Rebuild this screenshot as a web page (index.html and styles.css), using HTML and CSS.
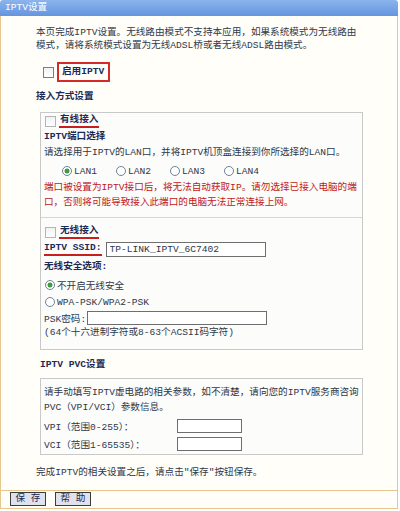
FILE: index.html
```html
<!DOCTYPE html>
<html lang="zh-CN">
<head>
    <meta charset="UTF-8">
    <title>IPTV设置</title>
    <link rel="stylesheet" href="styles.css">
</head>
<body>
    <div class="title">IPTV设置</div>
    <div class="panel">
        <div class="content">
            <p class="intro">本页完成IPTV设置。无线路由模式不支持本应用，如果系统模式为无线路由<br>模式，请将系统模式设置为无线ADSL桥或者无线ADSL路由模式。</p>

            <div class="enable-row">
                <input type="checkbox" class="check dark" id="enable-iptv">
                <label class="enable-label" for="enable-iptv">启用IPTV</label>
            </div>

            <div class="heading">接入方式设置</div>

            <div class="box">
                <div class="section wired">
                    <div class="row">
                        <input type="checkbox" class="check" id="wired">
                        <label class="mark" for="wired">有线接入</label>
                    </div>
                    <div class="sub-heading">IPTV端口选择</div>
                    <div class="line">请选择用于IPTV的LAN口，并将IPTV机顶盒连接到你所选择的LAN口。</div>
                    <div class="row lan-row">
                        <label class="lan"><input type="radio" class="radio" name="lan" checked>LAN1</label>
                        <label class="lan"><input type="radio" class="radio" name="lan">LAN2</label>
                        <label class="lan"><input type="radio" class="radio" name="lan">LAN3</label>
                        <label class="lan"><input type="radio" class="radio" name="lan">LAN4</label>
                    </div>
                    <p class="warning">端口被设置为IPTV接口后，将无法自动获取IP。请勿选择已接入电脑的端<br>口，否则将可能导致接入此端口的电脑无法正常连接上网。</p>
                </div>

                <div class="section wireless">
                    <div class="row">
                        <input type="checkbox" class="check" id="wireless">
                        <label class="mark" for="wireless">无线接入</label>
                    </div>
                    <div class="row ssid-row">
                        <span class="mark ssid-label">IPTV SSID:</span>
                        <input type="text" class="field ssid" value="TP-LINK_IPTV_6C7402">
                    </div>
                    <div class="sub-heading security">无线安全选项:</div>
                    <div class="row option">
                        <label><input type="radio" class="radio" name="sec" checked>不开启无线安全</label>
                    </div>
                    <div class="row option tight">
                        <label><input type="radio" class="radio" name="sec">WPA-PSK/WPA2-PSK</label>
                    </div>
                    <div class="row psk-row">
                        <span class="psk-label">PSK密码:</span>
                        <input type="text" class="field psk">
                    </div>
                    <div class="hint">(64个十六进制字符或8-63个ACSII码字符)</div>
                </div>
            </div>

            <div class="heading pvc-heading">IPTV PVC设置</div>

            <div class="box pvc">
                <p class="pvc-text">请手动填写IPTV虚电路的相关参数，如不清楚，请向您的IPTV服务商咨询<br>PVC（VPI/VCI）参数信息。</p>
                <div class="row pvc-row">
                    <span class="pvc-label">VPI（范围0-255）：</span>
                    <input type="text" class="field small">
                </div>
                <div class="row pvc-row second">
                    <span class="pvc-label">VCI（范围1-65535）：</span>
                    <input type="text" class="field small">
                </div>
            </div>

            <p class="done">完成IPTV的相关设置之后，请点击"保存"按钮保存。</p>
        </div>

        <div class="footer">
            <button class="btn">保 存</button>
            <button class="btn">帮 助</button>
        </div>
    </div>
</body>
</html>
```

FILE: styles.css
```css
body {
    margin: 0;
    width: 398px;
    font-family: "Liberation Mono", "Noto Sans CJK SC", monospace;
    font-size: 9.6px;
    color: #2f3949;
    background-color: #ffffff;
}

p {
    margin: 0;
}

.title {
    height: 16px;
    line-height: 16px;
    padding-left: 5px;
    color: #ffffff;
    background: linear-gradient(#8cb4ee, #6495de);
    border-radius: 3px 3px 0 0;
}

.panel {
    border: 1px solid #e6c58e;
    border-top: none;
    background-color: #fffef9;
}

.content {
    padding: 10px 0 10px 35px;
}

.intro {
    line-height: 13px;
}

.enable-row {
    display: flex;
    align-items: center;
    height: 20px;
    margin-top: 10px;
    padding-left: 7px;
}

.check {
    appearance: none;
    width: 11px;
    height: 11px;
    margin: 0 3px 0 0;
    border: 1px solid #b4b4b4;
    background: linear-gradient(#f2f2f2, #ffffff);
}

.check.dark {
    border-color: #7d7d7d;
}

.enable-label {
    height: 16px;
    line-height: 16px;
    padding: 0 4px 0 3px;
    border: 2px solid #d42a2a;
    font-weight: bold;
    color: #1c2a55;
}

.heading {
    margin-top: 8px;
    line-height: 13px;
    font-weight: bold;
    color: #1c2a55;
}

.box {
    width: 321px;
    margin: 9px 0 0 4px;
    border: 1px solid #c9c9c9;
    background-color: #fcfcfb;
}

.section {
    padding-left: 3px;
}

.wired {
    padding-bottom: 7px;
    border-bottom: 1px solid #d6d6d6;
}

.wireless {
    padding-top: 6px;
    padding-bottom: 10px;
}

.row {
    display: flex;
    align-items: center;
    height: 16px;
    white-space: nowrap;
}

.row > * {
    flex-shrink: 0;
}

.row .check {
    margin-left: 1px;
}

.mark {
    display: inline-block;
    line-height: 12px;
    padding: 0 1px;
    border-bottom: 2px solid #c81e1e;
    font-weight: bold;
    color: #1c2a55;
}

.sub-heading {
    margin-top: 1px;
    line-height: 14px;
    font-weight: bold;
    color: #1c2a55;
}

.line {
    margin-top: 2px;
    line-height: 14px;
}

.lan-row {
    margin-top: 3px;
    padding-left: 18px;
}

.lan {
    display: flex;
    align-items: center;
    width: 54px;
}

.radio {
    appearance: none;
    width: 10px;
    height: 10px;
    margin: 0 2px 0 0;
    border: 1px solid #6f8296;
    border-radius: 50%;
    background-color: #ffffff;
}

.radio:checked {
    background: radial-gradient(circle, #3f9d3f 0 2.2px, #ffffff 2.8px);
}

.warning {
    margin-top: 1px;
    line-height: 15px;
    color: #c01818;
}

.ssid-row {
    margin-top: 1px;
}

.ssid-label {
    padding: 0;
    margin-right: 4px;
}

.field {
    box-sizing: border-box;
    height: 15px;
    padding: 0 3px;
    border: 1px solid #6e6e6e;
    background-color: #ffffff;
    font-family: inherit;
    font-size: 9.6px;
    color: #2f3949;
}

.ssid {
    width: 160px;
}

.security {
    margin-top: 3px;
}

.option {
    margin-top: 3px;
}

.option label {
    display: flex;
    align-items: center;
    padding-left: 1px;
}

.option.tight {
    margin-top: 1px;
}

.psk-row {
    margin-top: 0;
}

.psk-label {
    margin-right: 1px;
}

.psk {
    width: 180px;
    height: 14px;
}

.hint {
    line-height: 13px;
}

.pvc-heading {
    margin-top: 8px;
    margin-left: 4px;
    line-height: 14px;
}

.pvc {
    margin-top: 6px;
    padding: 6px 0 2px 3px;
    box-sizing: border-box;
    width: 323px;
}

.pvc-text {
    line-height: 15px;
}

.pvc-row {
    margin-top: 3px;
}

.pvc-row.second {
    margin-top: 2px;
}

.pvc-label {
    width: 133px;
}

.small {
    width: 65px;
    height: 14px;
}

.done {
    margin-top: 11px;
    line-height: 14px;
}

.footer {
    display: flex;
    gap: 9px;
    padding: 1px 9px 2px;
    border-top: 1px solid #e6c58e;
}

.btn {
    width: 36px;
    height: 14px;
    padding: 0;
    border: 1px solid #3c3c3c;
    background-color: #dfe2ec;
    font-family: inherit;
    font-size: 9.6px;
    line-height: 12px;
    color: #1c2a55;
}
```
